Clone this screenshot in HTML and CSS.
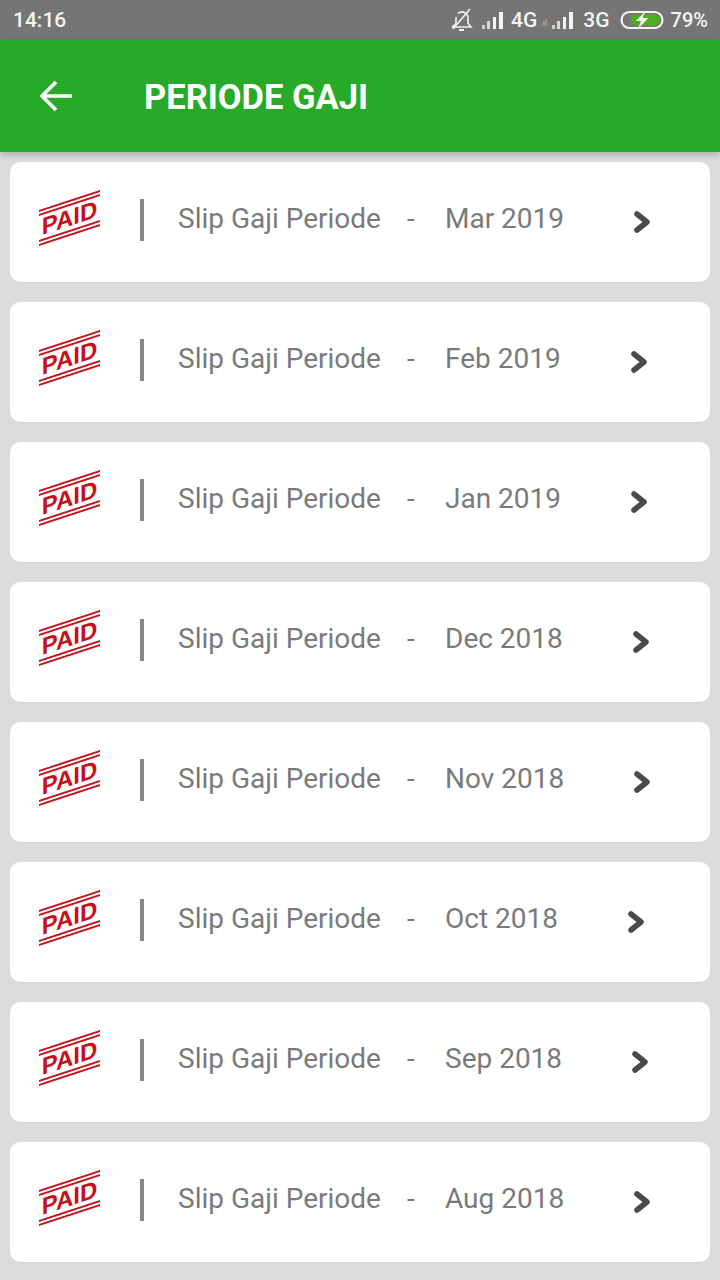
FILE: index.html
```html
<!DOCTYPE html>
<html lang="en">

<head>
    <meta charset="UTF-8">
    <meta name="viewport" content="width=device-width, initial-scale=1.0">
    <title>Periode Gaji</title>
    <link rel="stylesheet" href="styles.css">
</head>

<body>
    <div class="status-bar">
        <span class="status-time">14:16</span>
        <div class="status-icons">
            <svg class="icon-bell" width="22" height="24" viewBox="0 0 22 24" fill="none" stroke="#f4f4f4" stroke-width="1.600">
                <path d="M1 19h19l-3-3.500V10a6 6 0 0 0-10-4.500M5 9v6.500L1 19" />
                <path d="M8 22h5" stroke-width="2" />
                <path d="M2 21L19 1" />
            </svg>
            <svg class="icon-signal" width="22" height="18" viewBox="0 0 22 18" fill="#f4f4f4">
                <rect x="0" y="14" width="3" height="4" opacity="0.7" />
                <rect x="5" y="10" width="3" height="8" opacity="0.8" />
                <rect x="11" y="6" width="3" height="12" />
                <rect x="17" y="1" width="4" height="17" />
            </svg>
            <span class="status-net">4G</span>
            <span class="status-tiny">.ıl</span>
            <svg class="icon-signal" width="22" height="18" viewBox="0 0 22 18" fill="#f4f4f4">
                <rect x="0" y="14" width="3" height="4" opacity="0.7" />
                <rect x="5" y="10" width="3" height="8" opacity="0.8" />
                <rect x="11" y="6" width="3" height="12" />
                <rect x="17" y="1" width="4" height="17" />
            </svg>
            <span class="status-net status-3g">3G</span>
            <svg class="icon-battery" width="44" height="20" viewBox="0 0 44 20">
                <rect x="1.500" y="2" width="41" height="16" rx="8" fill="none" stroke="#f4f4f4" stroke-width="2.200" />
                <rect x="11" y="4.500" width="29" height="11" rx="5" fill="#4caf1f" />
                <path d="M26 0.500l-10 10.500h5l-3 8 10.500-11h-6z" fill="#f4f4f4" />
            </svg>
            <span class="status-battery">79%</span>
        </div>
    </div>

    <div class="app-bar">
        <svg class="back-arrow" width="34" height="32" viewBox="0 0 34 32" fill="none" stroke="#fff" stroke-width="3.500">
            <path d="M33 16H3" />
            <path d="M17 2L3 16l14 14" />
        </svg>
        <h1>PERIODE GAJI</h1>
    </div>

    <div class="slip-list">
        <div class="slip-card">
            <div class="stamp"><span>PAID</span></div>
            <div class="divider"></div>
            <span class="slip-label">Slip Gaji Periode</span>
            <span class="slip-dash">-</span>
            <span class="slip-month">Mar 2019</span>
            <svg class="chevron" width="18" height="24" viewBox="0 0 18 24" fill="none" stroke="#4a4a4a" stroke-width="5.500" stroke-linecap="round" stroke-linejoin="round">
                <path d="M4 4l10 8-10 8" />
            </svg>
        </div>
        <div class="slip-card">
            <div class="stamp"><span>PAID</span></div>
            <div class="divider"></div>
            <span class="slip-label">Slip Gaji Periode</span>
            <span class="slip-dash">-</span>
            <span class="slip-month">Feb 2019</span>
            <svg class="chevron" width="18" height="24" viewBox="0 0 18 24" fill="none" stroke="#4a4a4a" stroke-width="5.500" stroke-linecap="round" stroke-linejoin="round">
                <path d="M4 4l10 8-10 8" />
            </svg>
        </div>
        <div class="slip-card">
            <div class="stamp"><span>PAID</span></div>
            <div class="divider"></div>
            <span class="slip-label">Slip Gaji Periode</span>
            <span class="slip-dash">-</span>
            <span class="slip-month">Jan 2019</span>
            <svg class="chevron" width="18" height="24" viewBox="0 0 18 24" fill="none" stroke="#4a4a4a" stroke-width="5.500" stroke-linecap="round" stroke-linejoin="round">
                <path d="M4 4l10 8-10 8" />
            </svg>
        </div>
        <div class="slip-card">
            <div class="stamp"><span>PAID</span></div>
            <div class="divider"></div>
            <span class="slip-label">Slip Gaji Periode</span>
            <span class="slip-dash">-</span>
            <span class="slip-month">Dec 2018</span>
            <svg class="chevron" width="18" height="24" viewBox="0 0 18 24" fill="none" stroke="#4a4a4a" stroke-width="5.500" stroke-linecap="round" stroke-linejoin="round">
                <path d="M4 4l10 8-10 8" />
            </svg>
        </div>
        <div class="slip-card">
            <div class="stamp"><span>PAID</span></div>
            <div class="divider"></div>
            <span class="slip-label">Slip Gaji Periode</span>
            <span class="slip-dash">-</span>
            <span class="slip-month">Nov 2018</span>
            <svg class="chevron" width="18" height="24" viewBox="0 0 18 24" fill="none" stroke="#4a4a4a" stroke-width="5.500" stroke-linecap="round" stroke-linejoin="round">
                <path d="M4 4l10 8-10 8" />
            </svg>
        </div>
        <div class="slip-card">
            <div class="stamp"><span>PAID</span></div>
            <div class="divider"></div>
            <span class="slip-label">Slip Gaji Periode</span>
            <span class="slip-dash">-</span>
            <span class="slip-month">Oct 2018</span>
            <svg class="chevron" width="18" height="24" viewBox="0 0 18 24" fill="none" stroke="#4a4a4a" stroke-width="5.500" stroke-linecap="round" stroke-linejoin="round">
                <path d="M4 4l10 8-10 8" />
            </svg>
        </div>
        <div class="slip-card">
            <div class="stamp"><span>PAID</span></div>
            <div class="divider"></div>
            <span class="slip-label">Slip Gaji Periode</span>
            <span class="slip-dash">-</span>
            <span class="slip-month">Sep 2018</span>
            <svg class="chevron" width="18" height="24" viewBox="0 0 18 24" fill="none" stroke="#4a4a4a" stroke-width="5.500" stroke-linecap="round" stroke-linejoin="round">
                <path d="M4 4l10 8-10 8" />
            </svg>
        </div>
        <div class="slip-card">
            <div class="stamp"><span>PAID</span></div>
            <div class="divider"></div>
            <span class="slip-label">Slip Gaji Periode</span>
            <span class="slip-dash">-</span>
            <span class="slip-month">Aug 2018</span>
            <svg class="chevron" width="18" height="24" viewBox="0 0 18 24" fill="none" stroke="#4a4a4a" stroke-width="5.500" stroke-linecap="round" stroke-linejoin="round">
                <path d="M4 4l10 8-10 8" />
            </svg>
        </div>
    </div>
</body>

</html>
```

FILE: styles.css
```css
* {
    margin: 0;
    padding: 0;
    box-sizing: border-box;
}

body {
    width: 720px;
    height: 1280px;
    overflow: hidden;
    background: #dcdcdc;
    font-family: Roboto, sans-serif;
}

.status-bar {
    height: 40px;
    background: #757575;
    color: #f4f4f4;
    display: flex;
    align-items: center;
    justify-content: space-between;
    padding: 0 12px 0 13px;
}

.status-time {
    font-size: 21px;
    font-weight: 500;
}

.status-icons {
    display: flex;
    align-items: center;
}

.icon-bell {
    margin-right: 9px;
}

.status-net {
    font-size: 21px;
    font-weight: 500;
    margin-left: 7px;
}

.status-tiny {
    font-size: 9px;
    width: 15px;
    padding: 6px 0 0 3px;
    color: #bdbdbd;
}

.status-3g {
    margin: 0 10px 0 9px;
}

.icon-battery {
    margin-right: 7px;
}

.status-battery {
    font-size: 20px;
    font-weight: 500;
}

.app-bar {
    height: 112px;
    background: #27aa28;
    display: flex;
    align-items: center;
    padding-left: 39px;
    box-shadow: 0 3px 6px rgba(0, 0, 0, 0.2);
    position: relative;
}

.back-arrow {
    margin-right: 71px;
}

.app-bar h1 {
    font-size: 34.500px;
    font-weight: 700;
    color: #fff;
    padding-top: 2px;
}

.slip-list {
    display: flex;
    flex-direction: column;
    gap: 20px;
    padding: 10px 10px 0;
}

.slip-card {
    height: 120px;
    background: #fff;
    border-radius: 10px;
    box-shadow: 0 1px 2px rgba(0, 0, 0, 0.04);
    display: flex;
    align-items: center;
    padding: 0 0 4px 29px;
}

.stamp {
    width: 61px;
    height: 36px;
    margin: 0 40px 4px 0;
    border-top: 6px double #c4121c;
    border-bottom: 6px double #c4121c;
    color: #c4121c;
    font-family: "Liberation Sans", sans-serif;
    font-weight: 700;
    font-size: 24px;
    line-height: 24px;
    text-align: center;
    white-space: nowrap;
    transform: skewY(-18deg);
}

.divider {
    width: 4px;
    height: 42px;
    background: #888;
    margin-right: 34px;
}

.slip-label,
.slip-dash,
.slip-month {
    font-size: 28px;
    color: #7a7a7a;
    padding-bottom: 4px;
}

.slip-label {
    width: 229px;
}

.slip-dash {
    width: 38px;
}

.chevron {
    margin: 4px 0 0 69px;
}
```
